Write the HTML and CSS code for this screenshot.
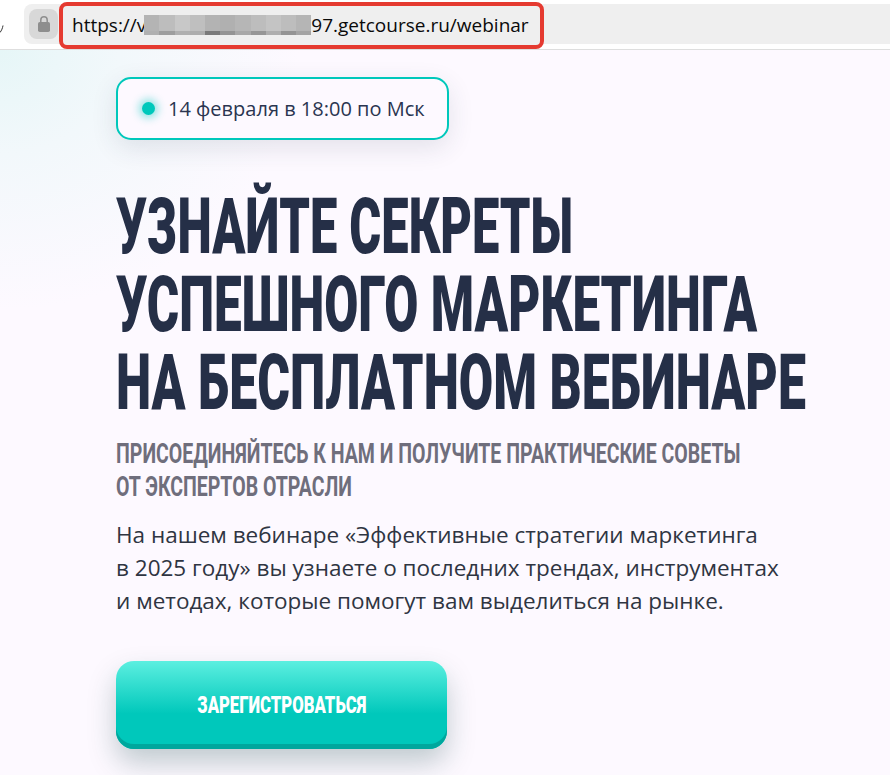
FILE: index.html
```html
<!DOCTYPE html>
<html lang="ru">
<head>
<meta charset="utf-8">
<title>Вебинар</title>
<link rel="stylesheet" href="styles.css">
</head>
<body>
<header class="browser">
  <svg class="edge" width="4" height="8" viewBox="0 0 4 8"><path d="M3 0.5C2.6 3 1.6 5.5 0 7.5" fill="none" stroke="#333" stroke-width="1"/></svg>
  <div class="field">
    <span class="lock"><svg width="12" height="16" viewBox="0 0 12 16"><path d="M2.8 7V4a3.2 3.2 0 0 1 6.4 0V7" fill="none" stroke="#8e8e8e" stroke-width="1.5"/><rect x="0" y="6" width="12" height="10" rx="1.8" fill="#8e8e8e"/></svg></span>
    <div class="url-box">
      <span>https://v</span>
      <span class="mosaic"><i class="m1"></i><i class="m2"></i><i class="m3"></i><i class="m4"></i><i class="m5"></i><i class="m6"></i><i class="m7"></i><i class="m8"></i><i class="m9"></i><i class="m10"></i><i class="m11"></i></span>
      <span>97.getcourse.ru/webinar</span>
    </div>
  </div>
</header>
<main class="page">
  <div class="date-badge"><span class="dot"></span><span>14 февраля в 18:00 по Мск</span></div>
  <h1 class="title"><span class="line-a">УЗНАЙТЕ СЕКРЕТЫ</span><span class="line-b">УСПЕШНОГО МАРКЕТИНГА</span><span class="line-c">НА БЕСПЛАТНОМ ВЕБИНАРЕ</span></h1>
  <h2 class="subtitle"><span>ПРИСОЕДИНЯЙТЕСЬ К НАМ И ПОЛУЧИТЕ ПРАКТИЧЕСКИЕ СОВЕТЫ</span><span>ОТ ЭКСПЕРТОВ ОТРАСЛИ</span></h2>
  <p class="lead">На нашем вебинаре «Эффективные стратегии маркетинга<br>в 2025 году» вы узнаете о последних трендах, инструментах<br>и методах, которые помогут вам выделиться на рынке.</p>
  <a class="cta" href="#"><span>ЗАРЕГИСТРОВАТЬСЯ</span></a>
</main>
</body>
</html>
```
FILE: styles.css
```css
* { box-sizing: border-box; }
html, body { margin: 0; height: 100%; }
body { width: 890px; height: 775px; overflow: hidden; background: #fdf9ff; font-family: "Open Sans", sans-serif; }
.browser { height: 50px; background: #fff; border-bottom: 1px solid #dedede; display: flex; align-items: flex-start; padding-top: 4px; }
.edge { margin-top: 21px; flex: none; }
.field { display: flex; align-items: center; height: 40px; margin-left: 20px; flex: 1; background: #efefef; border-radius: 8px 0 0 8px; padding-left: 5px; }
.lock { flex: none; width: 29px; height: 30px; background: #d8d8d8; border-radius: 8px; display: flex; align-items: center; justify-content: center; }
.url-box { flex: none; margin-left: 1px; width: 485px; height: 47px; border: 4px solid #e53a30; border-radius: 8px; display: flex; align-items: center; padding-left: 9px; font-size: 19px; color: #0a0a0a; white-space: nowrap; background: #efefef; transform: translateY(1px); }
.mosaic { display: flex; width: 167px; height: 20px; margin-left: -2px; flex: none; margin-top: -1px; }
.mosaic i { flex: 1; }
.mosaic .m1 { background: linear-gradient(#b4b4b4 80%, #b0b0b0 80%); }
.mosaic .m2 { background: linear-gradient(#bdbdbd 80%, #9e9e9e 80%); }
.mosaic .m3 { background: linear-gradient(#c8c8c8 80%, #b0b0b0 80%); }
.mosaic .m4 { background: linear-gradient(#bfbfbf 80%, #adadad 80%); }
.mosaic .m5 { background: linear-gradient(#b3b3b3 80%, #7a7a7a 80%); }
.mosaic .m6 { background: linear-gradient(#b0b0b0 80%, #949494 80%); }
.mosaic .m7 { background: linear-gradient(#b6b6b6 80%, #a8a8a8 80%); }
.mosaic .m8 { background: linear-gradient(#bdbdbd 80%, #969696 80%); }
.mosaic .m9 { background: linear-gradient(#c4c4c4 80%, #aeaeae 80%); }
.mosaic .m10 { background: linear-gradient(#bdbdbd 80%, #949494 80%); }
.mosaic .m11 { background: linear-gradient(#b5b5b5 80%, #a4a4a4 80%); }
.page { height: 725px; padding: 27px 0 0 116px; background: radial-gradient(ellipse 300px 260px at 0 0, #e6f6f7 0, #f2f8fb 40%, #fdf9ff 100%); }
.date-badge { width: 333px; height: 63px; background: #fdf9ff; border: 2px solid #00c8bb; border-radius: 15px; display: flex; align-items: center; gap: 13px; padding-left: 24px; font-size: 20px; color: #2a3550; box-shadow: 0 8px 26px rgba(40,60,80,.12); }
.dot { width: 13px; height: 13px; border-radius: 50%; background: #00c8bb; box-shadow: 0 0 9px 3px rgba(0,200,187,.45); }
.title { margin: 48px 0 0; font: 900 78px/78px Roboto, "Liberation Sans", sans-serif; color: #252f47; white-space: nowrap; }
.title span { display: block; transform-origin: left; }
.title .line-a { transform: scaleX(.625); }
.title .line-b { transform: scaleX(.634); }
.title .line-c { transform: scaleX(.641); }
.subtitle { margin: 15px 0 0; font: 700 28px/33px Roboto, "Liberation Sans", sans-serif; color: #6f6e7c; white-space: nowrap; }
.subtitle span { display: block; transform: scaleX(.697); transform-origin: left; }
.lead { margin: 15px 0 0; font-size: 22.5px; line-height: 33px; color: #2f3542; white-space: nowrap; }
.cta { margin-top: 44px; width: 331px; height: 88px; display: flex; align-items: center; justify-content: center; border-radius: 18px; text-decoration: none; color: #fff; font: 900 24px Roboto, "Liberation Sans", sans-serif; background: linear-gradient(#5cefe0 0, #00c8bb 60%); box-shadow: inset 0 -5px 0 #00a79d, 0 14px 28px rgba(20,70,70,.26); }
.cta span { transform: scaleX(.695); white-space: nowrap; }
```
